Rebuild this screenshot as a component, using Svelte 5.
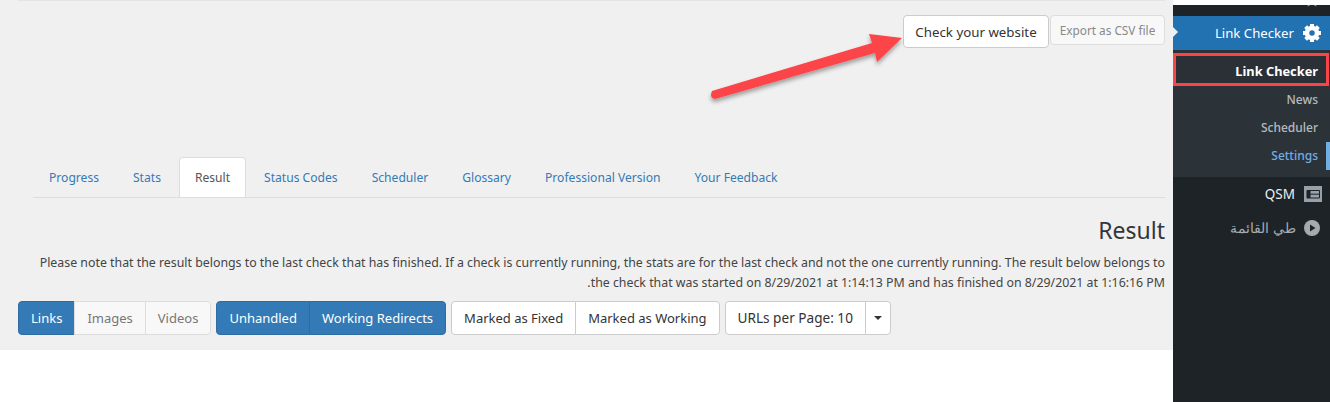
<script>
  const tabs = ['Progress', 'Stats', 'Result', 'Status Codes', 'Scheduler', 'Glossary', 'Professional Version', 'Your Feedback'];
  const submenu = ['News', 'Scheduler', 'Settings'];
  const teeth = [0, 45, 90, 135, 180, 225, 270, 315];
</script>

<div class="page">
  <main class="main">
    <div class="top-rule"></div>
    <div class="actions">
      <button class="btn check">Check your website</button>
      <button class="btn export">Export as CSV file</button>
    </div>

    <nav class="tabs">
      {#each tabs as tab}
        <a href="#tab" class="tab" class:active={tab === 'Result'}>{tab}</a>
      {/each}
    </nav>

    <h2>Result</h2>
    <p class="note" dir="rtl">Please note that the result belongs to the last check that has finished. If a check is currently running, the stats are for the last check and not the one currently running. The result below belongs to the check that was started on 8/29/2021 at 1:14:13 PM and has finished on 8/29/2021 at 1:16:16 PM.</p>

    <div class="toolbar">
      <div class="group">
        <button class="btn primary">Links</button>
        <button class="btn muted">Images</button>
        <button class="btn muted">Videos</button>
      </div>
      <div class="group">
        <button class="btn primary">Unhandled</button>
        <button class="btn primary">Working Redirects</button>
      </div>
      <div class="group">
        <button class="btn">Marked as Fixed</button>
        <button class="btn">Marked as Working</button>
      </div>
      <div class="group">
        <button class="btn per-page">URLs per Page: 10</button>
        <button class="btn caret-btn" aria-label="More"><span class="caret"></span></button>
      </div>
    </div>

    <svg class="arrow" width="210" height="85" viewBox="0 0 210 85">
      <defs>
        <filter id="arrow-shadow" x="-10%" y="-20%" width="120%" height="150%">
          <feDropShadow dx="0" dy="3" stdDeviation="2" flood-color="#000" flood-opacity="0.35" />
        </filter>
      </defs>
      <path d="M12 66 L172 18 L169 9 L202 13 L177 37 L175 28 L15 74 Q9 73 12 66 Z" fill="#fb4448" filter="url(#arrow-shadow)" />
    </svg>
  </main>

  <aside class="sidebar">
    <div class="peek">
      <svg class="star" width="16" height="16" viewBox="0 0 20 20"><path d="M10 1l2.700 5.900 6.300.7-4.700 4.300 1.300 6.300L10 15l-5.600 3.200 1.300-6.300L1 7.600l6.300-.7z" fill="#a7aaad" /></svg>
    </div>
    <div class="current">
      <span>Link Checker</span>
      <svg width="18" height="18" viewBox="-9 -9 18 18">
        <circle r="5" fill="none" stroke="#fff" stroke-width="4.500" />
        {#each teeth as angle}
          <rect x="-2" y="-9" width="4" height="4" fill="#fff" transform="rotate({angle})" />
        {/each}
      </svg>
    </div>
    <ul class="submenu">
      <li class="sub-title">Link Checker</li>
      {#each submenu as item}
        <li class:on={item === 'Settings'}>{item}</li>
      {/each}
    </ul>
    <div class="item qsm">
      <span>QSM</span>
      <svg width="18" height="16" viewBox="0 0 18 16">
        <rect width="18" height="16" fill="#98a1aa" />
        <path d="M3 4.500h12.500v7.500H3zM3 8.200h12.500" fill="none" stroke="#1d2327" />
        <rect x="3" y="4.500" width="3.500" height="7.500" fill="#1d2327" />
      </svg>
    </div>
    <div class="item collapse" dir="rtl">
      <svg width="16" height="16" viewBox="0 0 16 16"><circle cx="8" cy="8" r="8" fill="#a7aaad" /><path d="M6 4.500v7l5.500-3.500z" fill="#1d2327" /></svg>
      <span>طي القائمة</span>
    </div>
  </aside>
</div>

<style>
  :global(body) {
    margin: 0;
    background: #fff;
  }

  .page {
    display: flex;
    height: 402px;
    overflow: hidden;
    font-family: "Noto Sans", sans-serif;
  }

  .main {
    position: relative;
    width: 1173px;
    height: 350px;
    box-sizing: border-box;
    padding: 0 8px 0 18px;
    background: #f0f0f0;
    color: #32373c;
  }

  .top-rule {
    height: 1px;
    background: #e4e4e4;
  }

  .actions {
    display: flex;
    justify-content: flex-end;
    align-items: flex-start;
    margin-top: 14px;
  }

  .btn {
    font-family: inherit;
    font-size: 13px;
    line-height: 20px;
    padding: 6px 12px;
    background: #fff;
    color: #333;
    border: 1px solid #ccc;
    border-radius: 4px;
    cursor: pointer;
  }

  .check {
    width: 146px;
    height: 33px;
    padding: 0;
    font-size: 13.300px;
  }

  .export {
    width: 115px;
    height: 30px;
    padding: 0;
    margin-left: 1px;
    font-size: 11.800px;
    color: #888;
    background: #f8f8f8;
    border-color: #ddd;
  }

  .tabs {
    display: flex;
    gap: 2px;
    height: 40px;
    margin: 109px 0 0 15px;
    border-bottom: 1px solid #ddd;
  }

  .tab {
    height: 40px;
    box-sizing: border-box;
    padding: 0 15px;
    line-height: 40px;
    font-size: 12.100px;
    color: #337ab7;
    text-decoration: none;
    border: 1px solid transparent;
    border-bottom: 0;
    border-radius: 4px 4px 0 0;
  }

  .tab.active {
    background: #fff;
    color: #555;
    border-color: #ddd;
  }

  h2 {
    margin: 16px 0 0;
    font-size: 23px;
    font-weight: 400;
    line-height: 32px;
    text-align: right;
    color: #32373c;
  }

  .note {
    margin: 7px 0 0;
    font-size: 12.350px;
    line-height: 20px;
    color: #444;
  }

  .toolbar {
    display: flex;
    gap: 5px;
    margin-top: 8px;
  }

  .group {
    display: flex;
  }

  .group .btn {
    height: 34px;
    padding: 0 12px;
    border-radius: 0;
    margin-left: -1px;
  }

  .group .btn:first-child {
    margin-left: 0;
    border-radius: 4px 0 0 4px;
  }

  .group .btn:last-child {
    border-radius: 0 4px 4px 0;
  }

  .group .per-page {
    font-size: 13.600px;
  }

  .primary {
    background: #337ab7;
    border-color: #2e6da4;
    color: #fff;
  }

  .muted {
    background: #f8f8f8;
    color: #777;
    border-color: #ddd;
  }

  .caret {
    display: block;
    border-top: 4px solid #333;
    border-left: 4px solid transparent;
    border-right: 4px solid transparent;
  }

  .group .caret-btn {
    padding: 0 8px;
  }

  .arrow {
    position: absolute;
    left: 700px;
    top: 25px;
  }

  .sidebar {
    flex: 1;
    height: 402px;
    background: #1d2327;
    font-size: 13px;
    color: #f0f0f1;
  }

  .peek {
    position: relative;
    height: 11px;
    border-top: 5px solid #fff;
    overflow: hidden;
  }

  .star {
    position: absolute;
    right: 10px;
    top: -13px;
  }

  .current {
    position: relative;
    display: flex;
    align-items: center;
    justify-content: flex-end;
    gap: 9px;
    height: 34px;
    padding-right: 9px;
    background: #2271b1;
    color: #fff;
    font-size: 13.200px;
  }

  .current::before {
    content: "";
    position: absolute;
    left: 0;
    top: 11px;
    border-left: 5px solid #f0f0f0;
    border-top: 5px solid transparent;
    border-bottom: 5px solid transparent;
  }

  .submenu {
    list-style: none;
    margin: 0;
    padding: 8px 0 7px;
    background: #2c3338;
    text-align: right;
    font-size: 12px;
    font-weight: 500;
    color: rgba(240, 246, 252, 0.7);
  }

  .submenu li {
    height: 28px;
    line-height: 28px;
    padding-right: 12px;
  }

  .submenu .sub-title {
    box-sizing: border-box;
    height: 33px;
    line-height: 30px;
    margin: -5px 1px 0 0;
    padding-right: 8px;
    border: 3px solid #fb4448;
    background: #2a3036;
    color: #fff;
    font-size: 12.800px;
    font-weight: 700;
  }

  .submenu .on {
    color: #72aee6;
    border-right: 4px solid #72aee6;
    padding-right: 8px;
  }

  .item {
    display: flex;
    align-items: center;
    justify-content: flex-end;
    gap: 9px;
    height: 34px;
    padding-right: 8px;
  }

  .qsm {
    color: #f0f0f1;
    font-size: 13.500px;
  }

  .collapse {
    justify-content: flex-start;
    gap: 8px;
    padding-right: 10px;
    font-size: 13.500px;
    color: #a7aaad;
  }
</style>
